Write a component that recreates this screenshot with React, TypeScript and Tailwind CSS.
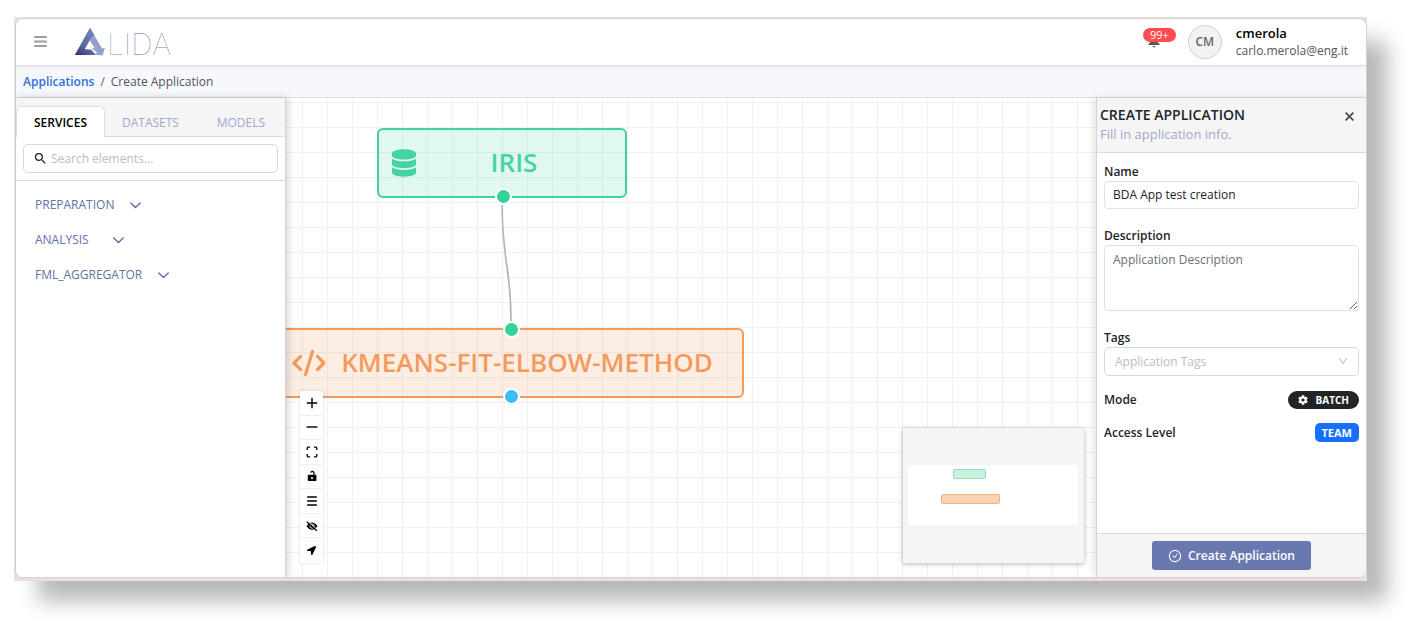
import type { ReactNode } from "react";
import { FaDatabase, FaCog, FaLocationArrow } from "react-icons/fa";
import { AiOutlineCheckCircle, AiOutlineDown } from "react-icons/ai";
import { MdSearch } from "react-icons/md";

function Logo() {
  return (
    <a href="#home" className="flex items-center gap-px" aria-label="ALIDA">
      <svg width="31" height="28" viewBox="0 0 31 28" aria-hidden="true">
        <defs>
          <linearGradient id="logo-left" x1="0" y1="1" x2="0.6" y2="0">
            <stop offset="0" stopColor="#2d3157" />
            <stop offset="0.45" stopColor="#5b68a0" />
            <stop offset="1" stopColor="#7280b8" />
          </linearGradient>
        </defs>
        <path d="M15 0 L0 27 H21 L16 21.500 H9.500 L15.500 10.500 L19 6.500 Z" fill="url(#logo-left)" />
        <path d="M15 0 L27 20.500 L30 20 L27.500 27.500 L19.500 26.500 L22 24.500 L16 19.500 L20 20.500 L13.500 10.500 Z" fill="#939fce" />
        <path d="M15 0 L0 27 H10 L13 21.500 H9.500 L15.500 10.500 L19 6.800 Z" fill="url(#logo-left)" />
      </svg>
      <span className="bg-linear-to-r from-[#a9afd0] via-[#7d86b0] to-[#9aa3cb] bg-clip-text pt-1 font-['Inter',sans-serif] text-[30px] leading-7 font-thin text-transparent">
        LIDA
      </span>
    </a>
  );
}

function Header() {
  return (
    <header className="flex items-center border-b border-[#dcdde0] px-[18px] py-1.5">
      <button type="button" aria-label="Toggle menu" className="mr-7 text-[#9a9c9f]">
        <svg width="13" height="12" viewBox="0 0 13 12" stroke="currentColor" strokeWidth="1.800" strokeLinecap="round">
          <path d="M.8 1h11.400M.8 5.500h11.400M.8 10h11.400" />
        </svg>
      </button>
      <Logo />
      <div className="ml-auto flex items-center">
        <button type="button" aria-label="Notifications" className="relative mr-3 flex h-7 items-start">
          <span className="relative z-10 rounded-full bg-[#ff4d4f] px-[7px] text-[11px] leading-[14px] text-white">99+</span>
          <svg className="absolute bottom-2 left-[5px]" width="12" height="12" viewBox="0 0 12 12" fill="#5a5a5a" aria-hidden="true">
            <path d="M2 6a4 4 0 0 1 8 0v1l1.500 .6v1.500H.5v-1.500l1.500-.6zM4.300 10h3.400L6 11.700z" />
          </svg>
        </button>
        <div className="mr-3.5 flex size-[34px] items-center justify-center rounded-full border border-[#cfcfcf] bg-[#f2f2f2] text-[12px] font-semibold text-[#666]">
          CM
        </div>
        <div className="leading-[17px]">
          <div className="text-[13px] font-semibold text-black">cmerola</div>
          <div className="text-[12px] text-[#555]">carlo.merola@eng.it</div>
        </div>
      </div>
    </header>
  );
}

function Breadcrumb() {
  return (
    <nav aria-label="Breadcrumb" className="flex gap-1.5 border-b border-[#d9dbe0] bg-[#f7f8fb] px-[7px] py-1.5 text-[12px] leading-[19px] shadow-[inset_0_3px_3px_-2px_#e6e9ed]">
      <a href="#applications" className="font-semibold text-[#2f6fe0]">Applications</a>
      <span className="text-[#5c6167]">/</span>
      <span className="text-[#51565c]">Create Application</span>
    </nav>
  );
}

const groups = [
  { name: "PREPARATION", gap: "gap-4" },
  { name: "ANALYSIS", gap: "gap-6" },
  { name: "FML_AGGREGATOR", gap: "gap-4" },
];

function ServicesPanel() {
  return (
    <aside className="z-10 flex w-[270px] shrink-0 flex-col border-r border-[#d2d3d5] bg-white shadow-[2px_0_8px_rgba(0,0,0,0.18)]">
      <div role="tablist" className="flex items-end bg-[#f5f5f5] pt-2 text-[12px] leading-[18px] shadow-[inset_0_-1px_0_#dedede]">
        <button type="button" role="tab" aria-selected="true" className="rounded-t-md border border-b-0 border-[#dedede] bg-white px-[17px] pt-[7px] pb-[5px] font-semibold text-black">
          SERVICES
        </button>
        <button type="button" role="tab" aria-selected="false" className="px-[17px] pt-[7px] pb-[5px] text-[#a3a8ce]">DATASETS</button>
        <button type="button" role="tab" aria-selected="false" className="ml-auto px-5 pt-[7px] pb-[5px] text-[#a3a8ce]">MODELS</button>
      </div>
      <div className="border-b border-[#dcdcdc] p-[7px]">
        <label className="flex items-center gap-[3px] rounded-[5px] border border-[#d9d9d9] px-[9px] text-[12px]">
          <MdSearch className="size-[15px] text-[#222]" aria-hidden="true" />
          <input type="search" aria-label="Search elements" placeholder="Search elements..." className="min-w-0 flex-1 py-1 leading-[19px] outline-none placeholder:text-[#bdbdbd]" />
        </label>
      </div>
      <ul className="flex flex-col gap-[17px] px-[19px] py-[15px] text-[12px] leading-[18px] font-medium text-[#6272a8]">
        {groups.map((g) => (
          <li key={g.name}>
            <button type="button" aria-expanded="false" className={`flex items-center ${g.gap}`}>
              {g.name}
              <svg width="11" height="7" viewBox="0 0 11 7" fill="none" stroke="currentColor" strokeWidth="1.500" strokeLinecap="round" strokeLinejoin="round">
                <path d="M.8 1l4.700 4.500L10.200 1" />
              </svg>
            </button>
          </li>
        ))}
      </ul>
    </aside>
  );
}

const controls: { label: string; icon: ReactNode }[] = [
  { label: "Zoom in", icon: <path d="M6 .8v10.400M.8 6h10.400" stroke="currentColor" strokeWidth="1.400" /> },
  { label: "Zoom out", icon: <path d="M.6 6h10.800" stroke="currentColor" strokeWidth="1.400" /> },
  {
    label: "Fit view",
    icon: <path d="M1.200 4V2.200q0-1 1-1H4M8 1.200h1.800q1 0 1 1V4M10.800 8v1.800q0 1-1 1H8M4 10.800H2.200q-1 0-1-1V8" fill="none" stroke="currentColor" strokeWidth="1.300" />,
  },
  {
    label: "Toggle lock",
    icon: (
      <>
        <path d="M4.600 2.600Q5 1.400 6.400 1.400 8.200 1.400 8.200 4.800" fill="none" stroke="currentColor" strokeWidth="1.200" />
        <path fillRule="evenodd" d="M1.800 5.600q0-.8.800-.8h7q.8 0 .8.800v4.600q0 .8-.8.800h-7q-.8 0-.8-.8zM6 7a1 1 0 1 0 .01 0z" />
      </>
    ),
  },
  { label: "Layout", icon: <path d="M1.200 2h9.600M1.200 6h9.600M1.200 10h9.600" stroke="currentColor" strokeWidth="1.500" /> },
  {
    label: "Hide map",
    icon: (
      <>
        <path d="M.6 6.200Q3 2.600 6 2.600t5.400 3.600Q9 9.700 6 9.700T.6 6.200z" />
        <circle cx="6" cy="6.100" r="2.100" fill="none" stroke="#fff" strokeWidth=".9" />
        <path d="M1.600 1.200l10 8.800" stroke="#fff" strokeWidth="1" />
        <path d="M.8 1.700l10.200 9" stroke="currentColor" strokeWidth="1.200" />
      </>
    ),
  },
];

function CodeIcon() {
  return (
    <svg width="34" height="28" viewBox="0 0 34 28" fill="none" stroke="currentColor" strokeWidth="3.200" strokeLinecap="round" strokeLinejoin="round" aria-hidden="true">
      <path d="M8.500 7.500L2 14l6.500 6.500M25.500 7.500L32 14l-6.500 6.500M20.500 2.500l-7 23" />
    </svg>
  );
}

function Node({ className, icon, label }: { className: string; icon: ReactNode; label: string }) {
  return (
    <div className={`absolute flex h-[70px] items-center rounded-md border-2 text-[26px] leading-8 font-semibold ${className}`}>
      {icon}
      <span className="flex-1 pb-0.5 text-center">{label}</span>
    </div>
  );
}

function Canvas() {
  return (
    <main className="relative min-w-0 flex-1 overflow-hidden bg-white bg-[linear-gradient(to_right,#f0f0f0_1px,transparent_1px),linear-gradient(to_bottom,#f0f0f0_1px,transparent_1px)] bg-size-[25px_25px] bg-position-[16px_4px]">
      <svg className="absolute top-0 left-0" width="500" height="300" fill="none" aria-hidden="true">
        <path d="M216 107C216 165 225 165 225 224" stroke="#b1b1b7" strokeWidth="1.600" />
      </svg>
      <Node
        className="top-[30px] left-[91px] w-[250px] border-[#45cf9c] bg-[#36d399]/15 px-[13px] text-[#45d3a0]"
        icon={<FaDatabase className="h-7 w-6" aria-hidden="true" />}
        label="IRIS"
      />
      <Node
        className="top-[230px] -left-[7px] w-[465px] border-[#f79a58] bg-[#f28b44]/15 px-[11px] pr-3.5 text-[#f59a5c]"
        icon={<CodeIcon />}
        label="KMEANS-FIT-ELBOW-METHOD"
      />
      <span className="absolute top-[90px] left-[209px] size-[17px] rounded-full border-2 border-white bg-[#36d399]" />
      <span className="absolute top-[223px] left-[217px] size-[17px] rounded-full border-2 border-white bg-[#36d399]" />
      <span className="absolute top-[290px] left-[217px] size-[17px] rounded-full border-2 border-white bg-[#3abff8]" />

      <div className="absolute bottom-3.5 left-3.5 grid h-[172px] w-[23px] grid-rows-7 divide-y divide-[#eeeeee] bg-[#fefefe] shadow-[0_0_2px_1px_rgba(0,0,0,0.08)]">
        {controls.map((c) => (
          <button key={c.label} type="button" aria-label={c.label} className="flex items-center justify-center text-black">
            <svg width="12" height="12" viewBox="0 0 12 12" fill="currentColor">{c.icon}</svg>
          </button>
        ))}
        <button type="button" aria-label="Center view" className="flex items-center justify-center text-black">
          <FaLocationArrow className="size-[9px]" />
        </button>
      </div>

      <div className="absolute right-3 bottom-3.5 bg-[#f5f5f5] shadow-[0_1px_5px_rgba(0,0,0,0.3)]">
        <svg width="181" height="135" viewBox="0 0 181 135" role="img" aria-label="Mini map">
          <rect x="5" y="37" width="170" height="60" fill="#fff" />
          <rect x="50.500" y="41.500" width="32" height="9" rx="1.500" fill="#c5f2da" stroke="#9fd8bb" />
          <rect x="38.500" y="66.500" width="58" height="9" rx="1" fill="#fdd2b3" stroke="#eeb086" />
        </svg>
      </div>
    </main>
  );
}

function ApplicationForm() {
  return (
    <aside className="z-10 w-[270px] shrink-0 border-l border-[#d2d3d5] bg-white shadow-[-2px_0_8px_rgba(0,0,0,0.12)]">
      <form className="flex h-full flex-col text-[12px] text-[#212529]" onSubmit={(e) => e.preventDefault()}>
        <div className="flex items-start justify-between border-b border-[#dcdcdc] bg-[#f5f5f5] pt-[7px] pr-3 pb-2 pl-[3px]">
          <div>
            <h2 className="text-[14px] leading-5 font-semibold">CREATE APPLICATION</h2>
            <p className="text-[13px] leading-[19px] text-[#a3a8ce]">Fill in application info.</p>
          </div>
          <button type="button" aria-label="Close" className="mt-[7px] text-[#4a4a4a]">
            <svg width="9" height="9" viewBox="0 0 9 9" stroke="currentColor" strokeWidth="1.800"><path d="M.6.6l7.800 7.800M8.400.6L.6 8.400" /></svg>
          </button>
        </div>
        <div className="flex flex-1 flex-col px-[7px] pt-2.5">
          <label htmlFor="name" className="leading-[18px] font-semibold">Name</label>
          <input id="name" defaultValue="BDA App test creation" className="mb-[18px] rounded border border-[#dee2e6] px-2 py-[3px] leading-5 outline-none" />
          <label htmlFor="description" className="leading-[18px] font-semibold">Description</label>
          <textarea id="description" placeholder="Application Description" className="mb-[18px] h-[66px] rounded border border-[#dee2e6] px-2 py-1 leading-5 outline-none placeholder:text-[#6b7075]" />
          <label htmlFor="tags" className="leading-[18px] font-semibold">Tags</label>
          <div className="relative">
            <select id="tags" defaultValue="" className="w-full appearance-none rounded-[5px] border border-[#d9d9d9] px-2.5 py-1 leading-[19px] text-[#bdbdbd] outline-none">
              <option value="">Application Tags</option>
            </select>
            <AiOutlineDown className="pointer-events-none absolute top-2 right-2.5 size-3 text-[#bbb]" aria-hidden="true" />
          </div>
          <div className="mt-[15px] flex items-center justify-between">
            <span className="font-semibold">Mode</span>
            <span className="flex items-center gap-2 rounded-full bg-[#212529] px-2.5 text-[10px] leading-[18px] font-bold text-white">
              <FaCog className="size-2.5" aria-hidden="true" />
              BATCH
            </span>
          </div>
          <div className="mt-3.5 flex items-center justify-between">
            <span className="font-semibold">Access Level</span>
            <span className="rounded-[5px] bg-[#176ffb] px-[7px] text-[11px] leading-[19px] font-bold text-white">TEAM</span>
          </div>
        </div>
        <div className="flex justify-center border-t border-[#dcdcdc] bg-[#f5f5f5] py-[7px]">
          <button type="submit" className="flex items-center gap-1.5 rounded-[3px] bg-[#6979b0] px-4 leading-[29px] font-semibold text-white">
            <AiOutlineCheckCircle className="size-3.5" aria-hidden="true" />
            Create Application
          </button>
        </div>
      </form>
    </aside>
  );
}

export default function App() {
  return (
    <div className="flex min-h-screen flex-col bg-white pt-[17px] pr-14 pb-[42px] pl-3.5 font-['Open_Sans','Noto_Sans',sans-serif]">
      <div className="flex flex-1 flex-col bg-[#eadfdf] pt-px pb-[3px] pl-px shadow-[22px_22px_20px_-2px_#b9b8b8]">
        <div className="flex flex-1 flex-col overflow-hidden rounded-lg border border-[#d8cfcf] bg-white">
          <Header />
          <Breadcrumb />
          <div className="flex flex-1">
            <ServicesPanel />
            <Canvas />
            <ApplicationForm />
          </div>
        </div>
      </div>
    </div>
  );
}
